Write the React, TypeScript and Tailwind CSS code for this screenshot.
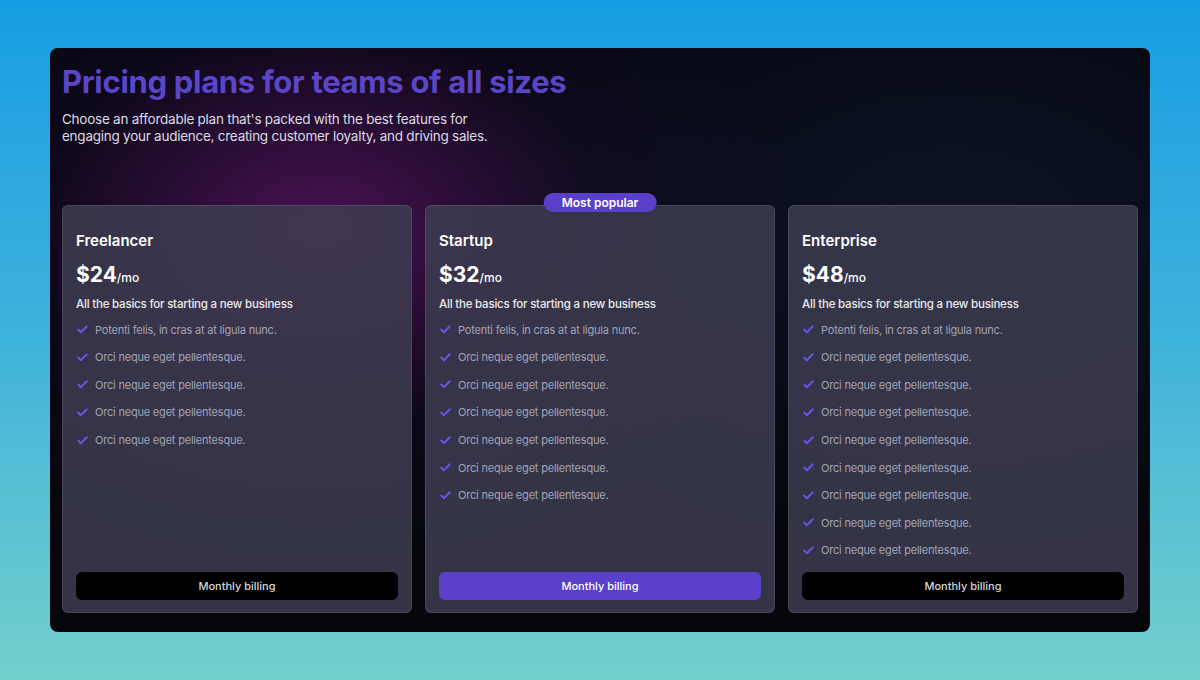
import React from 'react';
import { Check } from 'lucide-react';

type Plan = {
  name: string;
  price: string;
  features: string[];
  popular?: boolean;
};

const plans: Plan[] = [
  {
    name: 'Freelancer',
    price: '$24',
    features: [
      'Potenti felis, in cras at at ligula nunc.',
      'Orci neque eget pellentesque.',
      'Orci neque eget pellentesque.',
      'Orci neque eget pellentesque.',
      'Orci neque eget pellentesque.',
    ],
  },
  {
    name: 'Startup',
    price: '$32',
    popular: true,
    features: [
      'Potenti felis, in cras at at ligula nunc.',
      'Orci neque eget pellentesque.',
      'Orci neque eget pellentesque.',
      'Orci neque eget pellentesque.',
      'Orci neque eget pellentesque.',
      'Orci neque eget pellentesque.',
      'Orci neque eget pellentesque.',
    ],
  },
  {
    name: 'Enterprise',
    price: '$48',
    features: [
      'Potenti felis, in cras at at ligula nunc.',
      'Orci neque eget pellentesque.',
      'Orci neque eget pellentesque.',
      'Orci neque eget pellentesque.',
      'Orci neque eget pellentesque.',
      'Orci neque eget pellentesque.',
      'Orci neque eget pellentesque.',
      'Orci neque eget pellentesque.',
      'Orci neque eget pellentesque.',
    ],
  },
];

const PlanCard = ({ plan }: { plan: Plan }) => (
  <div className="relative flex flex-col rounded-md border border-white/10 bg-[#3d3c51]/85 px-[13px] pt-[25px] pb-[12px]">
    {plan.popular && (
      <div className="absolute -top-[13px] left-1/2 -translate-x-1/2 rounded-full bg-[#5a3fcb] px-[18px] py-[1px] text-[12px] font-semibold leading-[17px] text-white">
        Most popular
      </div>
    )}
    <h3 className="text-[15px] font-semibold leading-5 text-white">{plan.name}</h3>
    <div className="mt-[10px] flex items-baseline text-white">
      <span className="text-[21px] font-bold leading-7">{plan.price}</span>
      <span className="text-[12px] font-medium">/mo</span>
    </div>
    <p className="mt-[7px] text-[11.5px] font-medium leading-4 tracking-[-0.2px] text-white/90">
      All the basics for starting a new business
    </p>
    <ul className="mt-[4px] flex flex-col">
      {plan.features.map((f, i) => (
        <li key={i} className="flex h-[27.6px] items-center gap-[6px] text-[11px] tracking-[-0.2px] text-[#a3a2b4]">
          <Check className="h-[13px] w-[13px] text-[#6b52e6]" strokeWidth={3.5} />
          <span>{f}</span>
        </li>
      ))}
    </ul>
    <button
      className={`mt-auto h-[28px] w-full rounded-md text-[11px] font-medium ${
        plan.popular ? 'bg-[#5a3fcb] text-white' : 'bg-black text-gray-300'
      }`}
    >
      Monthly billing
    </button>
  </div>
);

export default function App() {
  return (
    <div
      className="h-[680px] w-[1200px] bg-gradient-to-b from-[#159de3] via-[#3eb3db] to-[#72cfcb] px-[50px] pt-[48px]"
      style={{ fontFamily: 'Inter, "Noto Sans", sans-serif' }}
    >
      <div className="relative h-[584px] overflow-hidden rounded-lg bg-[#05070d]">
        {/* glow */}
        <div className="pointer-events-none absolute inset-0 bg-[radial-gradient(ellipse_480px_330px_at_270px_180px,rgba(85,20,95,0.85),rgba(25,10,45,0.4)_60%,transparent_100%)]" />
        <div className="pointer-events-none absolute inset-0 bg-[radial-gradient(ellipse_520px_320px_at_900px_180px,rgba(20,30,60,0.55),transparent_100%)]" />

        <div className="relative flex h-full flex-col px-3 pt-[15px] pb-[19px]">
          <h1 className="text-[31px] font-bold leading-[38px] tracking-[-0.3px] text-[#5b45c9]">
            Pricing plans for teams of all sizes
          </h1>
          <p className="mt-[10px] w-[440px] text-[13.5px] leading-[17px] tracking-[-0.25px] text-[#dcdbe4]">
            Choose an affordable plan that's packed with the best features for engaging your audience, creating customer loyalty, and driving sales.
          </p>

          <div className="mt-[60px] grid flex-1 grid-cols-3 gap-[13px]">
            {plans.map((p) => (
              <PlanCard key={p.name} plan={p} />
            ))}
          </div>
        </div>
      </div>
    </div>
  );
}
